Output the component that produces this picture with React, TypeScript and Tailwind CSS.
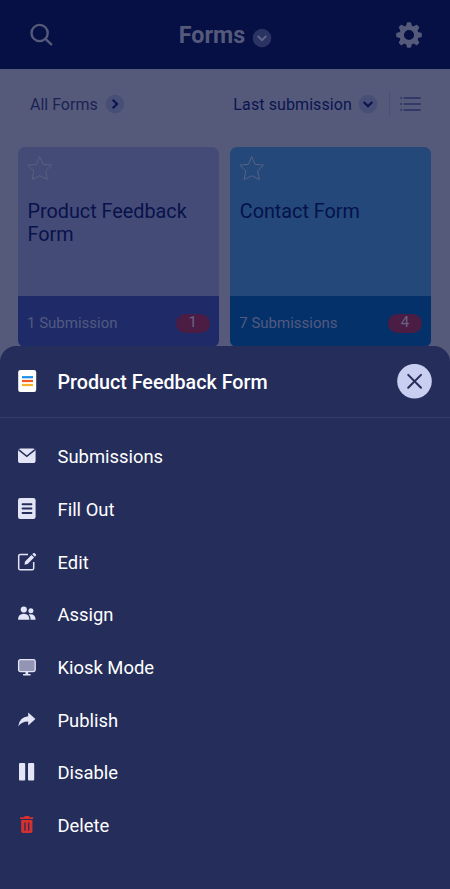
import type { ReactNode } from "react";

const Star = ({ color }: { color: string }) => (
  <svg width="26" height="26" viewBox="0 0 26 26" fill="none" stroke={color} strokeWidth="1" strokeLinejoin="round">
    <path d="M12.7 1.6 L16 9.4 L24.6 10.1 L18.6 15.9 L20.3 24.5 L12.7 20.7 L5.1 24.5 L6.8 15.9 L0.8 10.1 L9.4 9.4 Z" />
  </svg>
);

const Chevron = ({ down = false, bg, color, width }: { down?: boolean; bg: string; color: string; width: number }) => (
  <svg width="20" height="20" viewBox="0 0 20 20" fill="none" className="block shrink-0">
    <circle cx="10" cy="10" r="9.3" fill={bg} />
    <path
      d={down ? "M5.7 8 L10 12.2 L14.3 8" : "M7.7 5.7 L12 10 L7.7 14.3"}
      stroke={color}
      strokeWidth={width}
    />
  </svg>
);

const Gear = () => (
  <svg width="26" height="26" viewBox="-13 -13 26 26" fill="#555a7b" className="block">
    <circle r="7.3" fill="none" stroke="#555a7b" strokeWidth="4.4" />
    {[0, 45, 90, 135, 180, 225, 270, 315].map((a) => (
      <path key={a} transform={`rotate(${a})`} d="M-3.8 -8.3 Q-2.4 -9.5 -2.2 -12 Q-2 -12.8 -1.2 -12.8 H1.2 Q2 -12.8 2.2 -12 Q2.4 -9.5 3.8 -8.3 Z" />
    ))}
  </svg>
);

type CardProps = {
  title: string;
  count: string;
  badge: string;
  top: string;
  bottom: string;
  star: string;
  titleColor: string;
};

const Card = ({ title, count, badge, top, bottom, star, titleColor }: CardProps) => (
  <article className={`flex h-[200px] flex-1 flex-col overflow-hidden rounded-[7px] ${top}`}>
    <div className="h-[149px] px-[9px] pt-[8px]">
      <Star color={star} />
      <h2 className={`mt-[19px] pl-[0.5px] text-[19.8px] leading-[23px] ${titleColor}`}>{title}</h2>
    </div>
    <div className={`flex flex-1 items-center justify-between pr-[9px] pb-px pl-[9px] ${bottom}`}>
      <span className="pt-[4px] text-[15px] leading-5 text-[#525a80]">{count}</span>
      <span className="mt-[4px] flex h-[19px] w-[34px] items-start justify-center rounded-full bg-[#4b1d44] text-[15px] leading-[17px] text-[#666386]">
        {badge}
      </span>
    </div>
  </article>
);

const LIGHT = "#e3e5f6";
const SHEET = "#252d5b";

const items: { label: string; icon: ReactNode }[] = [
  {
    label: "Submissions",
    icon: (
      <>
        <rect x="1" y="3.4" width="17.6" height="14.6" rx="2.6" fill={LIGHT} />
        <path d="M1.5 4.6 L9.8 11.4 L18.1 4.6" fill="none" stroke={SHEET} strokeWidth="1.5" />
      </>
    ),
  },
  {
    label: "Fill Out",
    icon: (
      <>
        <rect x="1" y="0" width="17.6" height="21" rx="2.2" fill={LIGHT} />
        <path d="M5.6 6.2 H14.4 M5.6 10.5 H14.4 M5.6 14.9 H14.4" stroke={SHEET} strokeWidth="2" strokeLinecap="round" />
      </>
    ),
  },
  {
    label: "Edit",
    icon: (
      <>
        <path d="M11 3.4 H3.3 Q1.7 3.4 1.7 5 V17.2 Q1.7 18.8 3.3 18.8 H15.1 Q16.7 18.8 16.7 17.2 V11" fill="none" stroke={LIGHT} strokeWidth="1.5" />
        <path d="M7.5 13.7 L8 10.5 L14.5 4 L17.1 6.6 L10.6 13.1 Z M15.3 3.3 L16.5 2.1 Q17 1.7 17.5 2.1 L19 3.6 Q19.4 4.1 19 4.6 L17.9 5.8 Z" fill={LIGHT} />
      </>
    ),
  },
  {
    label: "Assign",
    icon: (
      <g fill={LIGHT}>
        <circle cx="6.8" cy="6.5" r="3.1" />
        <circle cx="13.9" cy="7.8" r="2.5" />
        <path d="M1 16.8 Q1 10.8 6.8 10.8 Q12.4 10.8 12.4 16.8 Z" />
        <path d="M13.6 16.8 Q13.5 13.3 11.7 11.3 Q18.6 10.2 18.6 16.8 Z" />
      </g>
    ),
  },
  {
    label: "Kiosk Mode",
    icon: (
      <>
        <rect x="1.6" y="3.6" width="16.6" height="12" rx="1.8" fill="#9295b3" stroke={LIGHT} strokeWidth="1.3" />
        <path d="M8.5 16 H11.2 V18 H13.6 V19.4 H6.1 V18 H8.5 Z" fill={LIGHT} />
      </>
    ),
  },
  {
    label: "Publish",
    icon: <path d="M1.2 17.5 Q2.4 8 11.2 7.3 V3.4 L18.4 9.9 L11.2 16.4 V12.4 Q4.8 12.2 1.2 17.5 Z" fill={LIGHT} />,
  },
  {
    label: "Disable",
    icon: (
      <g fill={LIGHT}>
        <rect x="2" y="1.9" width="6.2" height="17.6" rx="1" />
        <rect x="11" y="1.9" width="6.2" height="17.6" rx="1" />
      </g>
    ),
  },
  {
    label: "Delete",
    icon: (
      <>
        <path d="M3.2 3.3 H7 L7.7 2 H12 L12.7 3.3 H16.2 V4.9 H3.2 Z" fill="#d8302f" />
        <path d="M4.2 6 H15.4 V17.3 Q15.4 19 13.7 19 H5.9 Q4.2 19 4.2 17.3 Z" fill="#d8302f" />
        <path d="M8 8.4 V16.8 M11.7 8.4 V16.8" stroke={SHEET} strokeWidth="1.3" />
      </>
    ),
  },
];

export default function App() {
  return (
    <div className="relative h-[889px] w-[450px] overflow-hidden bg-[#555a7b] font-[Roboto,sans-serif]">
      <header className="flex h-[69px] items-center justify-between bg-[#061044] pr-[28px] pl-[29px]">
        <svg width="24" height="24" viewBox="0 0 24 24" fill="none" stroke="#555a7b" strokeWidth="2.4" strokeLinecap="round" className="mt-px">
          <circle cx="10.6" cy="10" r="8.1" />
          <path d="M16.5 15.9 L22.2 21.3" />
        </svg>
        <div className="flex items-center gap-[7px] pl-[2px]">
          <h1 className="text-[23.3px] leading-[28px] font-bold text-[#555a7b]">Forms</h1>
          <div className="pt-[6px]">
            <Chevron down bg="#2b3363" color="#606587" width={1.8} />
          </div>
        </div>
        <div className="pt-px">
          <Gear />
        </div>
      </header>

      <div className="flex h-[78px] items-center justify-between pr-[29px] pb-[8px] pl-[30px]">
        <div className="flex items-center gap-[7px]">
          <span className="pt-px text-[16px] leading-5 text-[#1a2253]">All Forms</span>
          <Chevron bg="#484f77" color="#0a1550" width={2.2} />
        </div>
        <div className="flex items-center">
          <span className="pt-px text-[16px] leading-5 tracking-[0.1px] text-[#0a1550]">Last submission</span>
          <div className="ml-[6px]">
            <Chevron down bg="#484f77" color="#0a1550" width={2.2} />
          </div>
          <div className="ml-[11px] h-[25px] w-px bg-[#4a5075]" />
          <svg width="21" height="16" viewBox="0 0 21 16" fill="none" stroke="#303968" className="ml-[10px]" strokeLinecap="round">
            <path d="M4.4 2 H20 M4.4 8 H20 M4.4 14 H20" strokeWidth="1.8" />
            <path d="M1.1 2 H1.2 M1.1 8 H1.2 M1.1 14 H1.2" strokeWidth="2" />
          </svg>
        </div>
      </div>

      <main className="flex gap-[11.5px] pr-[19px] pl-[18px]">
        <Card title="Product Feedback Form" count="1 Submission" badge="1" top="bg-[#454b77]" bottom="bg-[#1f2a68]" star="#5b6080" titleColor="text-[#08124b]" />
        <Card title="Contact Form" count="7 Submissions" badge="4" top="bg-[#25487a]" bottom="bg-[#05316b]" star="#576286" titleColor="text-[#04124b]" />
      </main>

      <section className="absolute inset-x-0 bottom-0 h-[543.5px] rounded-t-[16px] bg-[#252d5b]">
        <div className="flex h-[72.5px] items-center border-b border-[#343c69] pr-[18px] pl-[17px]">
          <svg width="20" height="24" viewBox="0 0 20 24" className="shrink-0">
            <rect x="1.2" y="1" width="18" height="22" rx="2.2" fill="#fff" />
            <g strokeWidth="2.2">
              <path d="M5 8.2 H16" stroke="#1890e8" />
              <path d="M5 12 H16" stroke="#f05a22" />
              <path d="M5 16 H16" stroke="#fdb02b" />
            </g>
          </svg>
          <h2 className="ml-[20.5px] flex-1 pt-[3px] text-[19.7px] leading-6 font-medium text-white">Product Feedback Form</h2>
          <svg width="35" height="35" viewBox="0 0 35 35" className="block">
            <circle cx="17.5" cy="17.2" r="17.3" fill="#c9cff0" />
            <path d="M11.2 10.9 L24 23.7 M24 10.9 L11.2 23.7" stroke="#252d5b" strokeWidth="2" strokeLinecap="round" />
          </svg>
        </div>
        <ul className="pt-[12.5px] pl-[17px]">
          {items.map((item) => (
            <li key={item.label} className="flex h-[52.7px] items-center">
              <svg width="20" height="22" viewBox="0 0 20 22" className="mb-px shrink-0">
                {item.icon}
              </svg>
              <span className="ml-[20.5px] pt-px text-[18.4px] leading-6 text-white">{item.label}</span>
            </li>
          ))}
        </ul>
      </section>
    </div>
  );
}
